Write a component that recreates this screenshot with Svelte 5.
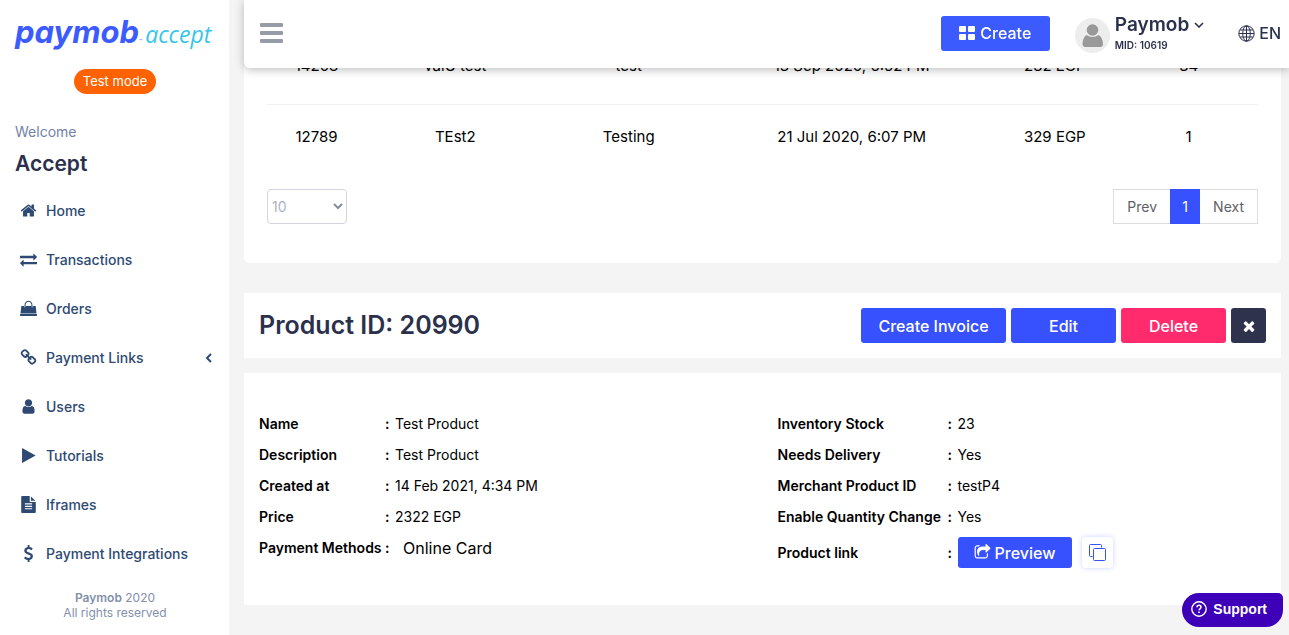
<script lang="ts">
  type NavItem = {
    label: string;
    icon: string;
    nested?: boolean;
  };

  type Detail = {
    label: string;
    value: string;
  };

  const icons: Record<string, string> = {
    home: "M1472 992v480q0 26-19 45t-45 19h-384v-384h-256v384h-384q-26 0-45-19t-19-45v-480q0-1 .5-3t.5-3l575-474 575 474q1 2 1 6zm223-69l-62 74q-8 9-21 11h-3q-13 0-21-7l-692-577-692 577q-12 8-24 7-13-2-21-11l-62-74q-8-10-7-23.5t11-21.5l719-599q32-26 76-26t76 26l244 204v-195q0-14 9-23t23-9h192q14 0 23 9t9 23v408l219 182q10 8 11 21.5t-7 23.5z",
    exchange: "M1792 1184v192q0 13-9.5 22.5t-22.5 9.5h-1376v192q0 13-9.5 22.5t-22.5 9.5q-12 0-24-10l-319-320q-9-9-9-22 0-14 9-23l320-320q9-9 23-9 13 0 22.5 9.5t9.5 22.5v192h1376q13 0 22.5 9.5t9.5 22.5zm0-544q0 14-9 23l-320 320q-9 9-23 9-13 0-22.5-9.5t-9.5-22.5v-192h-1376q-13 0-22.5-9.5t-9.5-22.5v-192q0-13 9.5-22.5t22.5-9.5h1376v-192q0-14 9-23t23-9q12 0 24 10l319 319q9 9 9 23z",
    bag: "M10 1480h1772l10 120q4 36-20 62t-60 26h-1632q-36 0-60-26t-20-62zM140 640h340v90q0 50 36 50t36-50v-90h688v90q0 50 36 50t36-50v-90h340l90 770h-1692zM480 640v-140q0-180 122-302t294-122 294 122 122 302v140h-110v-140q0-130-90-222t-216-92-216 92-90 222v140z",
    chain: "M1520 1216q0-40-28-68l-208-208q-28-28-68-28-42 0-72 32 3 3 19 18.5t21.5 21.5 15 19 13 25.5 3.5 27.5q0 40-28 68t-68 28q-15 0-27.5-3.5t-25.5-13-19-15-21.5-21.5-18.5-19q-33 31-33 73 0 40 28 68l206 207q27 27 68 27 40 0 68-26l147-146q28-28 28-67zm-703-705q0-40-28-68l-206-207q-28-28-68-28-39 0-68 27l-147 146q-28 28-28 67 0 40 28 68l208 208q27 27 68 27 42 0 72-31-3-3-19-18.5t-21.5-21.5-15-19-13-25.5-3.5-27.5q0-40 28-68t68-28q15 0 27.5 3.5t25.5 13 19 15 21.5 21.5 18.5 19q33-31 33-73zm895 705q0 120-85 203l-147 146q-83 83-203 83-121 0-204-85l-206-207q-83-83-83-203 0-123 88-209l-88-88q-86 88-208 88-120 0-204-84l-208-208q-84-84-84-204t85-203l147-146q83-83 203-83 121 0 204 85l206 207q83 83 83 203 0 123-88 209l88 88q86-88 208-88 120 0 204 84l208 208q84 84 84 204z",
    user: "M1536 1399q0 109-62.5 187t-150.5 78h-854q-88 0-150.5-78t-62.5-187q0-85 8.5-160.5t31.5-152 58.5-131 94-89 134.5-34.5q131 128 313 128t313-128q76 0 134.5 34.5t94 89 58.5 131 31.5 152 8.5 160.5zm-256-887q0 159-112.5 271.5t-271.5 112.5-271.5-112.5-112.5-271.5 112.5-271.5 271.5-112.5 271.5 112.5 112.5 271.5z",
    play: "M1600 930l-1328 738q-23 13-39.5 3t-16.5-36v-1472q0-26 16.5-36t39.5 3l1328 738q23 13 23 31t-23 31z",
    file: "M1596 476q14 14 28 36h-472v-472q22 14 36 28zm-476 164h544v1056q0 40-28 68t-68 28h-1344q-40 0-68-28t-28-68v-1600q0-40 28-68t68-28h800v544q0 40 28 68t68 28zm160 736v-64q0-14-9-23t-23-9h-704q-14 0-23 9t-9 23v64q0 14 9 23t23 9h704q14 0 23-9t9-23zm0-256v-64q0-14-9-23t-23-9h-704q-14 0-23 9t-9 23v64q0 14 9 23t23 9h704q14 0 23-9t9-23zm0-256v-64q0-14-9-23t-23-9h-704q-14 0-23 9t-9 23v64q0 14 9 23t23 9h704q14 0 23-9t9-23z",
    dollar: "M1362 1185q0 153-99.5 263.5t-258.5 136.5v175q0 14-9 23t-23 9h-135q-13 0-22.5-9.5t-9.5-22.5v-175q-66-9-127.5-31t-101.5-44.5-74-48-46.5-37.5-17.5-18q-17-21-2-41l103-135q7-10 23-12 15-2 24 9l2 2q113 99 243 125 37 8 74 8 81 0 142.5-43t61.5-122q0-28-15-53t-33.5-42-58.5-37.5-66-32-80-32.5q-39-16-61.5-25t-61.5-26.5-62.5-31-56.5-35.5-53.5-42.5-43.5-49-35.5-58-21-66.5-8.5-78q0-138 98-242t255-134v-180q0-13 9.5-22.5t22.5-9.5h135q14 0 23 9t9 23v176q57 6 110.5 23t87 33.5 63.5 37.5 39 29 15 14q17 18 5 38l-81 146q-8 15-23 16-14 3-27-7-3-3-14.5-12t-39-26.5-58.5-32-74.5-26-85.5-11.5q-95 0-155 43t-60 111q0 26 8.5 48t29.5 41.5 39.5 33 56 31 60.5 27 70 27.5q53 20 81 31.5t76 35 75.5 42.5 62 50 53 63.5 31.5 76.5 13 94z",
    share: "M1472 989v259q0 119-84.5 203.5t-203.5 84.5h-832q-119 0-203.5-84.5t-84.5-203.5v-832q0-119 84.5-203.5t203.5-84.5h255q13 0 22.5 9.5t9.5 22.5q0 27-26 32-77 26-133 60-10 4-16 4h-112q-66 0-113 47t-47 113v832q0 66 47 113t113 47h832q66 0 113-47t47-113v-214q0-19 18-29 28-13 54-37 16-16 35-8 21 9 21 29zm237-496l-384 384q-18 19-45 19-12 0-25-5-39-17-39-59v-192h-160q-323 0-438 131-119 137-74 473 3 23-20 34-8 2-12 2-16 0-26-13-10-14-21-31t-39.5-68.5-49.5-99.5-38.5-114-17.5-122q0-49 3.5-91t14-90 28-88 47-81.5 68.5-74 94.5-61.5 124.5-48.5 159.5-30.5 196.5-11h160v-192q0-42 39-59 13-5 25-5 26 0 45 19l384 384q19 19 19 45t-19 45z",
    times: "M1490 1322q0 40-28 68l-136 136q-28 28-68 28t-68-28l-294-294-294 294q-28 28-68 28t-68-28l-136-136q-28-28-28-68t28-68l294-294-294-294q-28-28-28-68t28-68l136-136q28-28 68-28t68 28l294 294 294-294q28-28 68-28t68 28l136 136q28 28 28 68t-28 68l-294 294 294 294q28 28 28 68z",
  };

  const navItems: NavItem[] = [
    { label: "Home", icon: "home" },
    { label: "Transactions", icon: "exchange" },
    { label: "Orders", icon: "bag" },
    { label: "Payment Links", icon: "chain", nested: true },
    { label: "Users", icon: "user" },
    { label: "Tutorials", icon: "play" },
    { label: "Iframes", icon: "file" },
    { label: "Payment Integrations", icon: "dollar" },
  ];

  const products = [
    ["14208", "valU test", "test", "13 Sep 2020, 6:52 PM", "232 EGP", "34"],
    ["12789", "TEst2", "Testing", "21 Jul 2020, 6:07 PM", "329 EGP", "1"],
  ];

  const general: Detail[] = [
    { label: "Name", value: "Test Product" },
    { label: "Description", value: "Test Product" },
    { label: "Created at", value: "14 Feb 2021, 4:34 PM" },
    { label: "Price", value: "2322 EGP" },
  ];

  const inventory: Detail[] = [
    { label: "Inventory Stock", value: "23" },
    { label: "Needs Delivery", value: "Yes" },
    { label: "Merchant Product ID", value: "testP4" },
    { label: "Enable Quantity Change", value: "Yes" },
  ];

  let pageSize = $state("10");
</script>

{#snippet icon(name: string, size: number)}
  <svg width={size} height={size} viewBox="0 0 1792 1792" fill="currentColor" aria-hidden="true">
    <path d={icons[name]} />
  </svg>
{/snippet}

{#snippet detailRow(item: Detail)}
  <div class="detail">
    <dt>{item.label}</dt>
    <dd><span class="colon">:</span>{item.value}</dd>
  </div>
{/snippet}

<div class="app">
  <aside class="sidebar">
    <a class="logo" href="#home">
      <span class="brand">paymob</span><span class="tm">™</span>
      <span class="product">accept</span>
    </a>
    <span class="mode">Test mode</span>
    <p class="welcome">Welcome</p>
    <h2 class="merchant">Accept</h2>

    <nav>
      {#each navItems as item (item.label)}
        <a href="#{item.icon}">
          <span class="nav-icon">{@render icon(item.icon, 17)}</span>
          {item.label}
          {#if item.nested}
            <svg class="nav-arrow" width="8" height="10" viewBox="0 0 8 10" aria-hidden="true">
              <path d="M6 1 2 5l4 4" fill="none" stroke="currentColor" stroke-width="2" />
            </svg>
          {/if}
        </a>
      {/each}
    </nav>

    <footer>
      <div><b>Paymob</b> 2020</div>
      <div>All rights reserved</div>
    </footer>
  </aside>

  <header class="topbar">
    <button class="menu" type="button" aria-label="Toggle menu">
      <span></span><span></span><span></span>
    </button>

    <button class="btn create" type="button">
      <svg width="16" height="14" viewBox="0 0 16 14" fill="currentColor" aria-hidden="true">
        <rect width="7" height="6" rx="1" />
        <rect x="9" width="7" height="6" rx="1" />
        <rect y="8" width="7" height="6" rx="1" />
        <rect x="9" y="8" width="7" height="6" rx="1" />
      </svg>
      Create
    </button>

    <div class="account">
      <svg class="avatar" width="35" height="35" viewBox="0 0 35 35" aria-hidden="true">
        <circle cx="17.5" cy="17.5" r="17.5" fill="#ededed" />
        <circle cx="17.5" cy="12" r="5.8" fill="#999" />
        <path d="M11.5 17q6 4 12 0 4 2 4.5 9 0 3-3 3H10.500q-3 0-3-3 .5-7 4-9z" fill="#999" />
      </svg>
      <div>
        <button class="account-name" type="button">
          Paymob
          <svg width="10" height="6" viewBox="0 0 10 6" aria-hidden="true">
            <path d="M1 1l4 4 4-4" fill="none" stroke="currentColor" stroke-width="1.6" />
          </svg>
        </button>
        <div class="mid">MID: 10619</div>
      </div>
    </div>

    <button class="lang" type="button">
      <svg width="17" height="17" viewBox="0 0 17 17" fill="none" stroke="currentColor" aria-hidden="true">
        <circle cx="8.5" cy="8.5" r="7.7" />
        <ellipse cx="8.5" cy="8.5" rx="3.8" ry="7.7" />
        <path d="M8.5 1v15M1 8.5h15M2 5h13M2 12h13" />
      </svg>
      EN
    </button>
  </header>

  <main>
    <section class="card listing">
      <table>
        <tbody>
          {#each products as row (row[0])}
            <tr>
              {#each row as cell}
                <td>{cell}</td>
              {/each}
            </tr>
          {/each}
        </tbody>
      </table>

      <div class="table-footer">
        <div class="size-wrap">
          <select aria-label="Rows per page" bind:value={pageSize}>
            <option>10</option>
            <option>25</option>
            <option>50</option>
          </select>
          <svg width="10" height="7" viewBox="0 0 10 7" aria-hidden="true">
            <path d="M1 1l4 4 4-4" fill="none" stroke="currentColor" stroke-width="2" />
          </svg>
        </div>
        <div class="pager">
          <button type="button">Prev</button>
          <button class="current" type="button" aria-current="page">1</button>
          <button type="button">Next</button>
        </div>
      </div>
    </section>

    <section class="card heading">
      <h1>Product ID: 20990</h1>
      <div class="actions">
        <button class="btn wide" type="button">Create Invoice</button>
        <button class="btn" type="button">Edit</button>
        <button class="btn danger" type="button">Delete</button>
        <button class="btn close" type="button" aria-label="Close">{@render icon("times", 16)}</button>
      </div>
    </section>

    <section class="card details">
      <dl>
        {#each general as item (item.label)}
          {@render detailRow(item)}
        {/each}
        <div class="detail">
          <dt>Payment Methods</dt>
          <dd><span class="colon">:</span><span class="method">Online Card</span></dd>
        </div>
      </dl>

      <dl class="stock">
        {#each inventory as item (item.label)}
          {@render detailRow(item)}
        {/each}
        <div class="detail link">
          <dt>Product link</dt>
          <dd>
            <span class="colon">:</span>
            <button class="btn preview" type="button">{@render icon("share", 17)}Preview</button>
            <button class="copy" type="button" aria-label="Copy link">
              <svg width="17" height="17" viewBox="0 0 17 17" fill="none" stroke="currentColor" aria-hidden="true">
                <path d="M3.500 12.500h-2q-1 0-1-1v-10q0-1 1-1h10q1 0 1 1v2" />
                <rect x="4.5" y="4.5" width="12" height="12" rx="1" />
              </svg>
            </button>
          </dd>
        </div>
      </dl>
    </section>
  </main>

  <button class="support" type="button">
    <svg width="16" height="16" viewBox="0 0 16 16" fill="none" stroke="currentColor" aria-hidden="true">
      <circle cx="8" cy="8" r="7.2" stroke-width="1.4" />
      <path d="M6 6.300q0-2 2-2t2 1.800q0 1-1 1.700t-1 1.500" stroke-width="1.5" />
      <path d="M8 10.500v1.500" stroke-width="1.6" />
    </svg>
    Support
  </button>
</div>

<style>
  :global(body) {
    margin: 0;
    background: #f4f4f4;
  }

  .app {
    display: flex;
    min-height: 100vh;
    font-family: Inter, "Liberation Sans", sans-serif;
    font-size: 14px;
    color: #000;
  }

  button,
  select {
    font: inherit;
    cursor: pointer;
  }

  a {
    color: inherit;
    text-decoration: none;
  }

  /* sidebar */
  .sidebar {
    display: flex;
    flex-direction: column;
    flex: 0 0 229px;
    min-width: 0;
    box-sizing: border-box;
    padding: 16px 14px 16px 15px;
    background: #fff;
    color: #2e4a72;
  }

  .logo {
    display: flex;
    align-items: baseline;
    height: 36px;
    line-height: 32px;
    white-space: nowrap;
  }

  .brand {
    font-size: 31px;
    font-weight: 700;
    font-style: italic;
    color: #3b5bff;
  }

  .tm {
    font-size: 5px;
    color: #3b5bff;
  }

  .product {
    margin-left: 3px;
    font-family: "Open Sans", sans-serif;
    font-size: 23px;
    font-style: italic;
    color: #35c5ea;
  }

  .mode {
    align-self: center;
    margin-top: 17px;
    padding: 0 9px;
    border-radius: 13px;
    background: #ff6200;
    color: #fff;
    font-size: 13px;
    line-height: 25px;
  }

  .welcome {
    margin: 28px 0 0;
    color: #7282a5;
    line-height: 20px;
  }

  .merchant {
    margin: 8px 0 0;
    color: #2b304c;
    font-size: 21px;
    font-weight: 600;
    line-height: 28px;
  }

  nav {
    margin-top: 8px;
  }

  nav a {
    display: flex;
    align-items: center;
    height: 49px;
    font-weight: 500;
  }

  .nav-icon {
    display: flex;
    justify-content: center;
    width: 27px;
    margin-right: 4px;
  }

  .nav-arrow {
    margin-left: auto;
    margin-right: 2px;
  }

  footer {
    margin-top: 12px;
    text-align: center;
    color: #8290ab;
    font-size: 12px;
    line-height: 15px;
  }

  footer b {
    font-weight: 600;
  }

  /* top bar stays over the scrolled content */
  .topbar {
    position: fixed;
    top: 0;
    left: 244px;
    right: 0;
    z-index: 2;
    display: flex;
    align-items: center;
    box-sizing: border-box;
    height: 68px;
    padding: 0 8px 2px 16px;
    border-radius: 0 0 0 6px;
    background: #fff;
    box-shadow: 0 2px 10px rgba(0, 0, 0, 0.25);
    color: #2b304c;
  }

  .menu {
    display: flex;
    flex-direction: column;
    gap: 4px;
    margin-right: auto;
    padding: 0;
    border: none;
    background: none;
  }

  .menu span {
    width: 23px;
    height: 4px;
    border-radius: 1px;
    background: #989ca8;
  }

  .btn {
    display: flex;
    align-items: center;
    justify-content: center;
    width: 105px;
    height: 35px;
    padding: 0;
    border: none;
    border-radius: 3px;
    background: #3751ff;
    color: #fff;
    font-size: 16px;
    font-weight: 500;
  }

  .create {
    gap: 5px;
    width: 109px;
    margin-right: 25px;
    background: #3b5bff;
  }

  .account {
    display: flex;
    align-items: center;
    gap: 5px;
    margin-right: 34px;
  }

  .avatar {
    margin-top: 5px;
  }

  .account-name {
    display: flex;
    align-items: center;
    gap: 5px;
    padding: 0;
    border: none;
    background: none;
    color: inherit;
    font-size: 19px;
    font-weight: 600;
    line-height: 24px;
  }

  .mid {
    font-size: 10px;
    font-weight: 600;
    line-height: 16px;
  }

  .lang {
    display: flex;
    align-items: center;
    gap: 4px;
    padding: 0;
    border: none;
    background: none;
    color: inherit;
    font-size: 16px;
    font-weight: 500;
  }

  /* content */
  main {
    display: flex;
    flex-direction: column;
    flex: 1;
    min-width: 0;
    gap: 15px;
    padding: 0 8px 30px 15px;
  }

  .card {
    background: #fff;
  }

  .listing {
    margin-bottom: 15px;
    padding: 32px 23px 39px;
    border-radius: 0 0 6px 6px;
  }

  table {
    width: 100%;
    border-collapse: collapse;
    table-layout: fixed;
  }

  td {
    height: 62px;
    padding: 0;
    text-align: center;
    font-size: 15px;
  }

  td:nth-child(1) { width: 10%; }
  td:nth-child(2) { width: 18%; }
  td:nth-child(3) { width: 17%; }
  td:nth-child(4) { width: 28%; }
  td:nth-child(5) { width: 13%; }
  td:nth-child(6) { width: 14%; }

  tr:first-child td {
    height: 66px;
    padding-bottom: 6px;
    border-bottom: 1px solid #f1f1f1;
  }

  .table-footer {
    display: flex;
    align-items: center;
    justify-content: space-between;
    margin-top: 22px;
  }

  .size-wrap {
    position: relative;
    color: #878c98;
  }

  .size-wrap svg {
    position: absolute;
    top: 14px;
    right: 4px;
    pointer-events: none;
  }

  select {
    display: block;
    appearance: none;
    width: 80px;
    height: 35px;
    padding: 0 4px;
    border: 1px solid #d3d3e2;
    border-radius: 4px;
    background: #fff;
    color: #adb3c2;
  }

  .pager {
    display: flex;
  }

  .pager button {
    height: 35px;
    padding: 0 13px;
    border: 1px solid #dcdcdc;
    background: #fff;
    color: #5f5f66;
  }

  .pager button:first-child {
    border-right: none;
  }

  .pager .current {
    width: 30px;
    padding: 0;
    border-color: #3751ff;
    background: #3751ff;
    color: #fff;
  }

  .pager button:last-child {
    border-left: none;
  }

  .heading {
    display: flex;
    align-items: center;
    justify-content: space-between;
    padding: 15px;
  }

  h1 {
    margin: 0;
    color: #2b304c;
    font-size: 25px;
    font-weight: 600;
    line-height: 35px;
  }

  .actions {
    display: flex;
    gap: 5px;
  }

  .wide {
    width: 145px;
  }

  .danger {
    background: #ff2b6d;
  }

  .close {
    width: 35px;
    background: #2e324d;
  }

  .details {
    display: grid;
    grid-template-columns: 1fr 1fr;
    padding: 35px 0 32px;
  }

  dl {
    margin: 0;
    padding-left: 15px;
  }

  .detail {
    display: flex;
    align-items: center;
    height: 31px;
  }

  dt {
    flex: 0 0 126px;
    white-space: nowrap;
    font-weight: 600;
  }

  .stock dt {
    flex-basis: 170px;
  }

  dd {
    display: flex;
    align-items: center;
    margin: 0;
  }

  .colon {
    width: 10px;
    font-weight: 600;
  }

  .method {
    margin-left: 8px;
    font-size: 16px;
  }

  .link {
    height: 41px;
  }

  .preview {
    gap: 4px;
    width: 114px;
    height: 31px;
  }

  .copy {
    display: flex;
    align-items: center;
    justify-content: center;
    width: 31px;
    height: 31px;
    margin-left: 10px;
    padding: 0;
    border: none;
    border-radius: 4px;
    background: #fff;
    box-shadow: 0 0 5px rgba(55, 81, 255, 0.25);
    color: #3751ff;
  }

  .support {
    position: fixed;
    right: 6px;
    bottom: 8px;
    z-index: 3;
    display: flex;
    align-items: center;
    gap: 6px;
    height: 34px;
    padding: 0 16px 2px 9px;
    border: none;
    border-radius: 17px 5px 17px 17px;
    background: #3d00b8;
    color: #fff;
    font-family: "Liberation Sans", Arial, sans-serif;
    font-size: 14px;
    font-weight: 700;
  }
</style>
